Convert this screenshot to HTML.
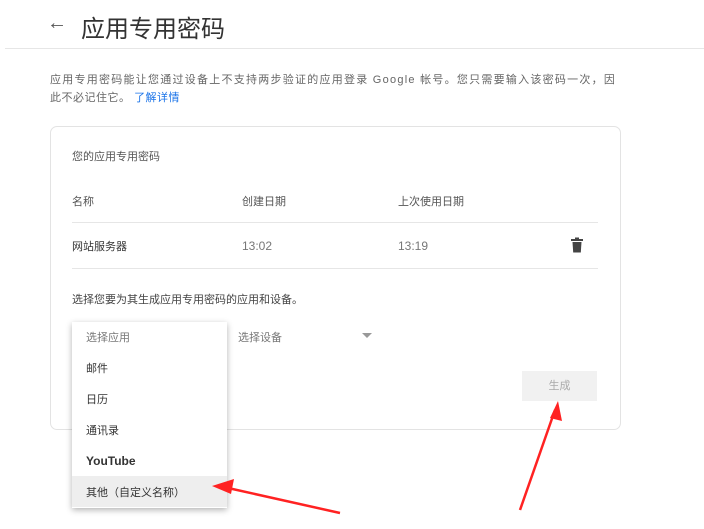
<!DOCTYPE html>
<html><head><meta charset="utf-8"><style>
body{margin:0;width:704px;height:529px;background:#fff;font-family:"Liberation Sans","Noto Sans CJK SC",sans-serif;position:relative;overflow:hidden;color:#333}
.a{position:absolute;white-space:nowrap}
.s{font-size:11px}
</style></head><body>
<div class="a" style="left:47px;top:12px;font-size:20px;color:#555">←</div>
<div class="a" style="left:81px;top:9px;font-size:24px;color:#333">应用专用密码</div>
<div class="a" style="left:5px;top:48px;width:699px;height:1px;background:#e6e6e6"></div>
<div class="a s" style="left:50px;top:71px;color:#666;letter-spacing:1.25px">应用专用密码能让您通过设备上不支持两步验证的应用登录 Google 帐号。您只需要输入该密码一次，因</div>
<div class="a s" style="left:50px;top:89px;color:#666;letter-spacing:0.5px">此不必记住它。 <span style="color:#1a73e8">了解详情</span></div>
<div class="a" style="left:50px;top:126px;width:569px;height:302px;border:1px solid #e3e3e3;border-radius:7px"></div>
<div class="a s" style="left:72px;top:148px;color:#555">您的应用专用密码</div>
<div class="a s" style="left:72px;top:193px;color:#555">名称</div>
<div class="a s" style="left:242px;top:193px;color:#555">创建日期</div>
<div class="a s" style="left:398px;top:193px;color:#555">上次使用日期</div>
<div class="a" style="left:72px;top:222px;width:526px;height:1px;background:#e6e6e6"></div>
<div class="a s" style="left:72px;top:238px;color:#333">网站服务器</div>
<div class="a s" style="left:242px;top:239px;color:#777;font-size:12px">13:02</div>
<div class="a s" style="left:398px;top:239px;color:#777;font-size:12px">13:19</div>
<svg class="a" style="left:570px;top:237px" width="14" height="16" viewBox="0 0 14 16"><rect x="1" y="2" width="12" height="2" fill="#444"/><rect x="5" y="0.5" width="4" height="2" fill="#444"/><path d="M2.5 5h9l-.7 10.5h-7.6z" fill="#444"/></svg>
<div class="a" style="left:72px;top:268px;width:526px;height:1px;background:#e6e6e6"></div>
<div class="a s" style="left:72px;top:291px;color:#444">选择您要为其生成应用专用密码的应用和设备。</div>
<div class="a s" style="left:238px;top:329px;color:#777">选择设备</div>
<svg class="a" style="left:362px;top:333px" width="10" height="6"><path d="M0 0h10L5 5z" fill="#999"/></svg>
<div class="a s" style="left:522px;top:371px;width:75px;height:30px;background:#f1f1f1;line-height:30px;text-align:center;color:#aaa">生成</div>
<div class="a" style="left:72px;top:322px;width:155px;height:186px;background:#fff;box-shadow:0 2px 6px rgba(0,0,0,.3)"></div>
<div class="a s" style="left:86px;top:329px;color:#777">选择应用</div>
<div class="a s" style="left:86px;top:360px;color:#333">邮件</div>
<div class="a s" style="left:86px;top:391px;color:#333">日历</div>
<div class="a s" style="left:86px;top:422px;color:#333">通讯录</div>
<div class="a s" style="left:86px;top:454px;color:#333;font-weight:bold;font-size:12px">YouTube</div>
<div class="a" style="left:72px;top:476px;width:155px;height:31px;background:#eee"></div>
<div class="a s" style="left:86px;top:484px;color:#333">其他（自定义名称）</div>
<svg class="a" style="left:0;top:0" width="704" height="529"><path d="M340 513L228 488" stroke="#f22" stroke-width="2.5"/><path d="M212 486l22-7-3 15z" fill="#f22"/><path d="M520 510L555 410" stroke="#f22" stroke-width="2.5"/><path d="M558 401l4 20-12-3z" fill="#f22"/></svg>
</body></html>
